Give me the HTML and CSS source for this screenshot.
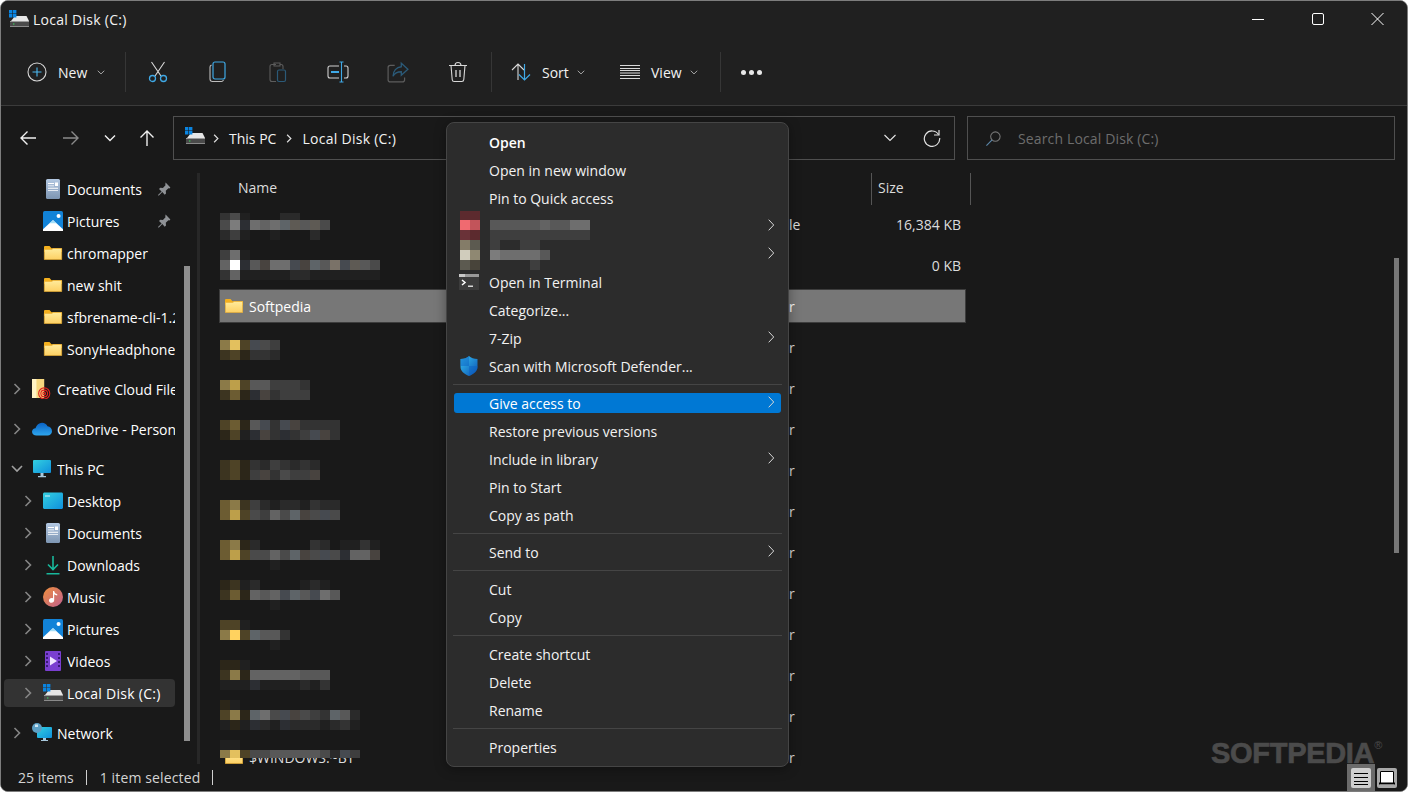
FILE: index.html
```html
<!DOCTYPE html>
<html lang="en">
<head>
<meta charset="utf-8">
<title>Local Disk (C:)</title>
<link rel="stylesheet" href="styles.css">
</head>
<body>
<svg class="defs" aria-hidden="true">
  <defs>
    <linearGradient id="gFolder" x1="0" y1="0" x2="0" y2="1"><stop offset="0" stop-color="#ffeb9c"/><stop offset="1" stop-color="#fdd063"/></linearGradient>
    <linearGradient id="gDoc" x1="0" y1="0" x2="0" y2="1"><stop offset="0" stop-color="#b3c8e2"/><stop offset="1" stop-color="#7d95b2"/></linearGradient>
    <linearGradient id="gDesk" x1="0" y1="0" x2="1" y2="1"><stop offset="0" stop-color="#33d0e0"/><stop offset="1" stop-color="#0f8fdc"/></linearGradient>
    <linearGradient id="gMusic" x1="0" y1="0" x2="1" y2="1"><stop offset="0" stop-color="#ef8f3c"/><stop offset="1" stop-color="#c0608f"/></linearGradient>
    <linearGradient id="gCloud" x1="0" y1="0" x2="0" y2="1"><stop offset="0" stop-color="#0a62c4"/><stop offset="1" stop-color="#2ea6ee"/></linearGradient>
    <linearGradient id="gShield" x1="0" y1="0" x2="1" y2="1"><stop offset="0" stop-color="#36c3f4"/><stop offset="1" stop-color="#0a4fb0"/></linearGradient>
    <symbol id="i-folder" viewBox="0 0 18 14"><path fill="#f4b01e" d="M0 1.2C0 .5.5 0 1.2 0h4.3l2 2.2h9.7c.5 0 .8.4.8.8v3H0z"/><path fill="url(#gFolder)" stroke="#eeb233" stroke-width=".7" d="M.35 3.4h7.4l1.3-.9h8.6v11.1H.35z"/></symbol>
    <symbol id="i-doc" viewBox="0 0 16 20"><rect x="1" y="0" width="14" height="20" rx="1.5" fill="url(#gDoc)"/><path fill="#fff" d="M3 4h6v.9H3zm0 2.4h6v.9H3zm0 2.4h10v.9H3zm0 2.4h10v.9H3z"/><rect x="10" y="3.5" width="3" height="3.5" fill="#fff"/></symbol>
    <symbol id="i-pic" viewBox="0 0 18 18"><rect width="18" height="18" rx="1.5" fill="#1283d8"/><circle cx="14" cy="4.5" r="1.8" fill="#fff"/><path fill="#fff" d="M0 16.5 9 8l9 8.5V18H0z"/><path fill="#7ed0f5" d="M9 8 5.8 11h6.4z" opacity=".7"/></symbol>
    <symbol id="i-drive" viewBox="0 0 20 18"><path fill="#e6e6e6" d="M2 11 6 6h11.5l2.5 5z"/><rect x="1" y="11" width="19" height="6" rx="1" fill="#4a4a4a"/><rect x="1" y="11" width="19" height="1" fill="#9a9a9a"/><rect x="1" y="16" width="19" height="1" fill="#8a8a8a"/><rect x="4" y="13.5" width="1.4" height="1" fill="#37e05b"/><path fill="#0a84e0" d="M0 0h3.4v3.4H0zm4 0h3.4v3.4H4zM0 4h3.4v3.4H0zm4 0h3.4v3.4H4z"/></symbol>
    <symbol id="i-pin" viewBox="0 0 14 14"><path fill="#8f9296" d="M8.6.6 13.4 5.4l-1 1-1-.2-2.6 2.6.2 2.6-1.3 1.3-2.4-2.6-3.6 3.6-.7-.7L4.6 9.4 2 7l1.3-1.3 2.6.2 2.6-2.6-.2-1z"/></symbol>
    <symbol id="i-chev" viewBox="0 0 8 12"><path fill="none" stroke="currentColor" stroke-width="1.6" d="M1.5 1 6.5 6l-5 5"/></symbol>
    <symbol id="i-down" viewBox="0 0 10 6"><path fill="none" stroke="currentColor" stroke-width="1.1" d="M1 .8 5 4.8 9 .8"/></symbol>
    <symbol id="i-sub" viewBox="0 0 7 12"><path fill="none" stroke="currentColor" stroke-width="1" d="m.7.7 5 5.3-5 5.3"/></symbol>
  </defs>
</svg>
<div class="window">
  <header class="titlebar">
    <svg class="title-icon"><use href="#i-drive"/></svg>
    <span class="title-text wide">Local Disk (C:)</span>
    <div class="caption">
      <svg class="cap-btn" viewBox="0 0 60 40"><path stroke="#fff" d="M24 19.5h12"/></svg>
      <svg class="cap-btn" viewBox="0 0 60 40"><rect x="24.5" y="13.5" width="11" height="11" rx="1.5" fill="none" stroke="#fff"/></svg>
      <svg class="cap-btn" viewBox="0 0 60 40"><path stroke="#fff" fill="none" d="m23.5 13 12 12m0-12-12 12"/></svg>
    </div>
  </header>

  <div class="toolbar">
    <div class="tb-group tb-new">
      <svg class="tb-ic" viewBox="0 0 20 20"><circle cx="10" cy="10" r="9" fill="none" stroke="#d8d8d8" stroke-width="1.1"/><path stroke="#4cb8f0" stroke-width="1.1" d="M10 5.5v9M5.5 10h9"/></svg>
      <span class="tb-label">New</span>
      <svg class="tb-caret"><use href="#i-down"/></svg>
    </div>
    <i class="tb-sep"></i>
    <div class="tb-icons">
      <span class="tb-btn"><svg viewBox="0 0 20 22"><path fill="none" stroke="#d8d8d8" stroke-width="1.1" d="M3.5 1 13 15M16.5 1 7 15"/><circle cx="4.5" cy="17.5" r="3" fill="none" stroke="#3fa9e6" stroke-width="1.3"/><circle cx="15.5" cy="17.5" r="3" fill="none" stroke="#3fa9e6" stroke-width="1.3"/></svg></span>
      <span class="tb-btn"><svg viewBox="0 0 20 22"><path fill="none" stroke="#bdbdbd" stroke-width="1.1" d="M3.5 4C2.5 4.500 2 5 2 6v12c0 1.500 1 2.500 2.500 2.500h9c1 0 1.500-.5 2-1.500"/><rect x="5" y="1" width="12" height="17" rx="2" fill="none" stroke="#3fa9e6" stroke-width="1.2"/></svg></span>
      <span class="tb-btn"><svg viewBox="0 0 20 22"><path fill="none" stroke="#5c5c5c" stroke-width="1.1" d="M8 3.500H4C2.800 3.500 2 4.300 2 5.500v13c0 1.200.8 2 2 2h4M6 2h6v3H6zM12 3.500h1c1.200 0 2 .8 2 2V8"/><rect x="9.500" y="9" width="8" height="11.500" rx="1.500" fill="none" stroke="#2b5a78" stroke-width="1.200"/></svg></span>
      <span class="tb-btn"><svg viewBox="0 0 22 22"><path fill="none" stroke="#d0d0d0" stroke-width="1.1" d="M12 5H3C1.800 5 1 5.800 1 7v8c0 1.200.8 2 2 2h9M17 5h2c1.200 0 2 .8 2 2v8c0 1.200-.8 2-2 2h-2"/><path stroke="#3fa9e6" stroke-width="2" d="M4 11h8"/><path fill="none" stroke="#3fa9e6" stroke-width="1.1" d="M14.500 1v20M12.500 1h4M12.500 21h4"/></svg></span>
      <span class="tb-btn"><svg viewBox="0 0 20 20"><path fill="none" stroke="#5c5c5c" stroke-width="1.1" d="M7 4H3C1.800 4 1 4.800 1 6v11c0 1.200.8 2 2 2h11c1.200 0 2-.8 2-2v-2"/><path fill="none" stroke="#2b5a78" stroke-width="1.200" d="M13 2l6 5.500-6 5.500V9.800c-3.500 0-6 1-7.500 4C5.500 9 8.500 5.500 13 5.200z"/></svg></span>
      <span class="tb-btn"><svg viewBox="0 0 20 22"><path fill="none" stroke="#d8d8d8" stroke-width="1.1" d="M1 4.500h18M3 4.500l1.200 14c.1 1.200 1 2 2 2h7.600c1 0 1.900-.8 2-2l1.200-14M7 4.500c0-2 1.300-3 3-3s3 1 3 3"/><path stroke="#d8d8d8" stroke-width="1.3" d="M8 9v7M12 9v7"/></svg></span>
    </div>
    <i class="tb-sep tb-sep2"></i>
    <div class="tb-group tb-sort">
      <svg class="tb-ic" viewBox="0 0 20 20"><path fill="none" stroke="#d8d8d8" stroke-width="1.1" d="M7 18V2M1 8l6-6 6 6"/><path fill="none" stroke="#3fa9e6" stroke-width="1.2" d="M13.500 2v16M8 12.500l5.500 5.500 5.500-5.500"/></svg>
      <span class="tb-label">Sort</span>
      <svg class="tb-caret"><use href="#i-down"/></svg>
    </div>
    <div class="tb-group tb-view">
      <svg class="tb-ic" viewBox="0 0 20 14"><path stroke="#d8d8d8" stroke-width="1" d="M0 .5h20M0 3.500h20M0 5.500h20M0 8h20M0 10.500h20M0 13.500h20"/></svg>
      <span class="tb-label">View</span>
      <svg class="tb-caret"><use href="#i-down"/></svg>
    </div>
    <i class="tb-sep tb-sep3"></i>
    <div class="tb-dots"><i></i><i></i><i></i></div>
  </div>

  <nav class="navrow">
    <div class="nav-btns">
      <svg viewBox="0 0 18 16"><path fill="none" stroke="#f0f0f0" stroke-width="1.400" d="M17 8H2M8.500 1.500 2 8l6.500 6.500"/></svg>
      <svg viewBox="0 0 18 16"><path fill="none" stroke="#8a8a8a" stroke-width="1.400" d="M1 8h15M9.500 1.500 16 8l-6.500 6.500"/></svg>
      <svg class="nav-small" viewBox="0 0 12 8"><path fill="none" stroke="#f0f0f0" stroke-width="1.400" d="m1 1.500 5 5 5-5"/></svg>
      <svg viewBox="0 0 16 18"><path fill="none" stroke="#f0f0f0" stroke-width="1.400" d="M8 17V2M1.500 8.500 8 2l6.500 6.500"/></svg>
    </div>
    <div class="address">
      <svg class="addr-icon"><use href="#i-drive"/></svg>
      <svg class="crumb-sep"><use href="#i-chev"/></svg>
      <span>This PC</span>
      <svg class="crumb-sep crumb-sep2"><use href="#i-chev"/></svg>
      <span class="wide">Local Disk (C:)</span>
      <span class="addr-spacer"></span>
      <svg class="addr-down" viewBox="0 0 12 8"><path fill="none" stroke="#e6e6e6" stroke-width="1.100" d="m.5 1 5.500 5.500L11.500 1"/></svg>
      <svg class="addr-refresh" viewBox="0 0 18 18"><path fill="none" stroke="#e0e0e0" stroke-width="1.200" d="M15.500 5.500A7.700 7.700 0 1 0 16.700 9"/><path fill="none" stroke="#e0e0e0" stroke-width="1.200" d="M16 1v5h-5"/></svg>
    </div>
    <div class="search">
      <svg viewBox="0 0 18 18"><circle cx="11" cy="7" r="5" fill="none" stroke="#777" stroke-width="1.100"/><path stroke="#5b86a8" stroke-width="1.200" d="M7.500 10.500 1.500 16.500"/></svg>
      <span class="wide-s">Search Local Disk (C:)</span>
    </div>
  </nav>

  <main class="content">
    <aside class="sidebar">
      <div class="tree">
        <div class="tree-row child"><i class="twist"></i><svg class="ti"><use href="#i-doc"/></svg><span class="tl">Documents</span><svg class="pin"><use href="#i-pin"/></svg></div>
        <div class="tree-row child"><i class="twist"></i><svg class="ti"><use href="#i-pic"/></svg><span class="tl">Pictures</span><svg class="pin"><use href="#i-pin"/></svg></div>
        <div class="tree-row child"><i class="twist"></i><svg class="ti ti-f"><use href="#i-folder"/></svg><span class="tl">chromapper</span></div>
        <div class="tree-row child"><i class="twist"></i><svg class="ti ti-f"><use href="#i-folder"/></svg><span class="tl">new shit</span></div>
        <div class="tree-row child"><i class="twist"></i><svg class="ti ti-f"><use href="#i-folder"/></svg><span class="tl">sfbrename-cli-1.2.0</span></div>
        <div class="tree-row child"><i class="twist"></i><svg class="ti ti-f"><use href="#i-folder"/></svg><span class="tl">SonyHeadphonesClient</span></div>

        <div class="tree-row top spaced"><svg class="twist"><use href="#i-chev"/></svg><svg class="ti" viewBox="0 0 18 18"><path fill="#f5d77e" d="M0 0h11v17H0z"/><path fill="#fff3c4" d="M0 0h4v17H0z"/><g fill="none" stroke="#e0201c" stroke-width="1"><circle cx="11" cy="13" r="5"/><circle cx="11" cy="13" r="3"/><circle cx="11" cy="13" r="1.200"/></g></svg><span class="tl">Creative Cloud Files</span></div>
        <div class="tree-row top spaced"><svg class="twist"><use href="#i-chev"/></svg><svg class="ti" viewBox="0 0 20 14"><path fill="url(#gCloud)" d="M4.500 13.500C2 13.500 0 12 0 9.800c0-2 1.500-3.400 3.500-3.600C4.500 3 7 .8 10 .8c2.500 0 4.500 1.300 5.500 3.500C18 4.700 20 6.500 20 9.300c0 2.500-2 4.200-4.500 4.200z"/></svg><span class="tl">OneDrive - Personal</span></div>
        <div class="tree-row top spaced"><svg class="twist open" viewBox="0 0 12 8"><path fill="none" stroke="#a0a0a0" stroke-width="1.600" d="m1 1 5 5 5-5"/></svg><svg class="ti" viewBox="0 0 20 18"><rect x="1" y="0" width="18" height="13" rx="1" fill="url(#gDesk)"/><path fill="#a8c8dc" d="M8.500 13h3v3h-3zM6 16h8v1.200H6z"/></svg><span class="tl">This PC</span></div>
        <div class="tree-row child"><svg class="twist"><use href="#i-chev"/></svg><svg class="ti ti-w" viewBox="0 0 20 17"><path fill="url(#gDesk)" d="M1.500 0h17c.8 0 1.500.7 1.500 1.500V15c0 .8-.7 1.500-1.500 1.500h-17C.7 16.500 0 15.800 0 15V1.500C0 .7.700 0 1.500 0z"/><path fill="#d8f4fb" d="M2 3h5v1H2z"/></svg><span class="tl">Desktop</span></div>
        <div class="tree-row child"><svg class="twist"><use href="#i-chev"/></svg><svg class="ti"><use href="#i-doc"/></svg><span class="tl">Documents</span></div>
        <div class="tree-row child"><svg class="twist"><use href="#i-chev"/></svg><svg class="ti" viewBox="0 0 18 20"><path fill="none" stroke="#18b89c" stroke-width="1.600" d="M9 1v13M4 9.500l5 5 5-5M2.500 18.800h13"/></svg><span class="tl">Downloads</span></div>
        <div class="tree-row child"><svg class="twist"><use href="#i-chev"/></svg><svg class="ti ti-w" viewBox="0 0 20 20"><circle cx="10" cy="10" r="10" fill="url(#gMusic)"/><path fill="#fff" d="M10 4h1.200c.3 2 1.500 2.800 3 3v1.500c-1.200 0-2.200-.5-3-1.200V13c0 1.700-1.200 2.800-2.700 2.800S6 14.800 6 13.400s1.100-2.500 2.600-2.500c.6 0 1 .1 1.400.3z"/></svg><span class="tl">Music</span></div>
        <div class="tree-row child"><svg class="twist"><use href="#i-chev"/></svg><svg class="ti"><use href="#i-pic"/></svg><span class="tl">Pictures</span></div>
        <div class="tree-row child"><svg class="twist"><use href="#i-chev"/></svg><svg class="ti" viewBox="0 0 16 20"><rect width="16" height="20" rx="1" fill="#7a3fd0"/><path fill="#3a1a78" d="M1 2h2v2H1zm0 4h2v2H1zm0 4h2v2H1zm0 4h2v2H1zm12-12h2v2h-2zm0 4h2v2h-2zm0 4h2v2h-2zm0 4h2v2h-2z"/><path fill="#f0e6ff" d="M5 5.500 12 10l-7 4.500z"/></svg><span class="tl">Videos</span></div>
        <div class="tree-row child selected"><svg class="twist"><use href="#i-chev"/></svg><svg class="ti"><use href="#i-drive"/></svg><span class="tl wide">Local Disk (C:)</span></div>
        <div class="tree-row top spaced"><svg class="twist"><use href="#i-chev"/></svg><svg class="ti ti-w" viewBox="0 0 20 20"><rect x="5" y="4" width="15" height="11" rx="1" fill="url(#gDesk)"/><path fill="#a8c8dc" d="M11 15h3v2h-3zM9 17h7v1H9z"/><circle cx="5" cy="5" r="5" fill="#5d9fc4"/><path fill="#cfe6f2" d="M3 1.500h3v2.500H3z"/></svg><span class="tl">Network</span></div>
      </div>
      <div class="side-scroll"></div>
    </aside>
    <div class="split"></div>
    <section class="files">
      <div class="col-head">
        <span class="col-name">Name</span>
        <span class="col-size">Size</span>
      </div>

      <div class="row"><div class="cell-name"><div class="mos m6">
        <div class="ml lt"><i class="k2"></i><i class="k4"></i><i class="k0"></i><i></i><i></i><i></i><i class="k1"></i><i class="k1"></i></div>
        <div class="ml"><i class="k4"></i><i class="k8"></i><i class="b1"></i><i class="k7"></i><i class="k6"></i><i class="k7"></i><i class="b3"></i><i class="w2"></i><i class="k5"></i><i class="w2"></i><i class="k4"></i></div>
        <div class="ml"><i class="k1"></i><i class="k3"></i><i class="k0"></i><i></i><i></i><i class="k0"></i><i></i><i></i><i></i><i class="k1"></i></div>
      </div></div><div class="cell-type">System file</div><div class="cell-size">16,384 KB</div></div>

      <div class="row"><div class="cell-name"><div class="mos m2">
        <div class="ml"><i class="k3"></i><i class="k7"></i><i class="k0"></i></div>
        <div class="ml"><i class="k6"></i><i class="kw"></i><i class="b1"></i><i class="k5"></i><i class="w1"></i><i class="k7"></i><i class="k7"></i><i class="b2"></i><i class="w1"></i><i class="b3"></i><i class="k5"></i><i class="w3"></i><i class="b2"></i><i class="w2"></i><i class="k5"></i><i class="k4"></i></div>
        <div class="ml"><i class="k2"></i><i class="k6"></i><i class="k0"></i><i class="k0"></i><i class="k0"></i><i class="k0"></i><i class="k0"></i><i class="k1"></i><i class="k1"></i><i class="k0"></i><i class="k0"></i><i class="k0"></i><i class="k0"></i><i class="k0"></i><i class="k0"></i><i class="k0"></i></div>
      </div></div><div class="cell-type cell-blank"></div><div class="cell-size">0 KB</div></div>

      <div class="row selected"><div class="cell-name"><svg class="file-folder"><use href="#i-folder"/></svg><span>Softpedia</span></div><div class="cell-type">File folder</div><div class="cell-size"></div></div>

      <div class="row"><div class="cell-name"><div class="mos m10">
        <div class="ml"><i class="y4"></i><i class="y6"></i><i class="y2"></i><i class="b2"></i><i class="k4"></i><i class="k3"></i></div>
        <div class="ml"><i class="y1"></i><i class="y2"></i><i class="y0"></i><i class="k2"></i><i class="k2"></i><i class="k1"></i></div>
      </div></div><div class="cell-type">File folder</div><div class="cell-size"></div></div>

      <div class="row"><div class="cell-name"><div class="mos m9">
        <div class="ml"><i class="y4"></i><i class="y5"></i><i class="y2"></i><i class="k5"></i><i class="k5"></i><i class="k3"></i><i class="k3"></i><i class="k3"></i><i class="k2"></i></div>
        <div class="ml"><i class="y1"></i><i class="y3"></i><i class="y0"></i><i class="b1"></i><i class="w1"></i><i class="k2"></i><i class="k3"></i><i class="k3"></i><i class="k3"></i></div>
      </div></div><div class="cell-type">File folder</div><div class="cell-size"></div></div>

      <div class="row"><div class="cell-name"><div class="mos m8">
        <div class="ml"><i class="y2"></i><i class="y3"></i><i class="y0"></i><i class="k5"></i><i class="b2"></i><i class="k2"></i><i class="b2"></i><i class="w1"></i><i class="k2"></i><i class="k2"></i><i class="k2"></i><i class="k2"></i></div>
        <div class="ml"><i class="y0"></i><i class="y2"></i><i class="k0"></i><i class="b1"></i><i class="w1"></i><i class="k2"></i><i class="b1"></i><i class="k2"></i><i class="k3"></i><i class="b2"></i><i class="w1"></i><i class="k2"></i></div>
      </div></div><div class="cell-type">File folder</div><div class="cell-size"></div></div>

      <div class="row"><div class="cell-name"><div class="mos m7">
        <div class="ml"><i class="y1"></i><i class="y2"></i><i class="y0"></i><i class="k2"></i><i class="k1"></i><i class="k3"></i><i class="k2"></i><i class="k1"></i><i class="k2"></i><i class="k1"></i></div>
        <div class="ml"><i class="y1"></i><i class="y2"></i><i class="y0"></i><i class="k3"></i><i class="w1"></i><i class="k2"></i><i class="k4"></i><i class="k3"></i><i class="k3"></i><i class="w1"></i></div>
      </div></div><div class="cell-type">File folder</div><div class="cell-size"></div></div>

      <div class="row"><div class="cell-name"><div class="mos m6">
        <div class="ml"><i class="y3"></i><i class="y4"></i><i class="y1"></i><i class="k3"></i><i class="k1"></i><i class="k0"></i><i class="k1"></i><i class="k1"></i><i class="k0"></i><i class="k2"></i><i class="k1"></i><i class="k1"></i></div>
        <div class="ml"><i class="y3"></i><i class="y5"></i><i class="y2"></i><i class="k4"></i><i class="k3"></i><i class="k6"></i><i class="k4"></i><i class="b3"></i><i class="w1"></i><i class="k4"></i><i class="b2"></i><i class="k4"></i></div>
      </div></div><div class="cell-type">File folder</div><div class="cell-size"></div></div>

      <div class="row"><div class="cell-name"><div class="mos m5">
        <div class="ml"><i class="y3"></i><i class="y4"></i><i class="y0"></i><i class="k1"></i><i></i><i></i><i></i><i></i><i></i><i class="k2"></i><i class="k1"></i><i></i><i class="k0"></i><i class="k0"></i><i class="k2"></i><i class="k0"></i></div>
        <div class="ml"><i class="y3"></i><i class="y5"></i><i class="y2"></i><i class="k4"></i><i class="k4"></i><i class="k6"></i><i class="k4"></i><i class="b3"></i><i class="w1"></i><i class="k4"></i><i class="b2"></i><i class="k4"></i><i class="b1"></i><i class="k6"></i><i class="k6"></i><i class="w1"></i></div>
        <div class="ml"><i></i><i></i><i></i><i></i><i></i><i class="k0"></i></div>
      </div></div><div class="cell-type">File folder</div><div class="cell-size"></div></div>

      <div class="row"><div class="cell-name"><div class="mos m4">
        <div class="ml"><i class="y0"></i><i class="y1"></i><i class="k0"></i><i class="k1"></i><i></i><i></i><i></i><i></i><i class="k0"></i><i class="k1"></i><i class="k0"></i></div>
        <div class="ml"><i class="y1"></i><i class="y3"></i><i class="y0"></i><i class="k6"></i><i class="k5"></i><i class="k6"></i><i class="b2"></i><i class="b3"></i><i class="k5"></i><i class="b2"></i><i class="k7"></i><i class="k5"></i></div>
        <div class="ml"><i></i><i></i><i></i><i></i><i></i><i class="k0"></i></div>
      </div></div><div class="cell-type">File folder</div><div class="cell-size"></div></div>

      <div class="row"><div class="cell-name"><div class="mos m3">
        <div class="ml"><i class="y2"></i><i class="y2"></i><i class="k0"></i></div>
        <div class="ml"><i class="y4"></i><i class="y7"></i><i class="y2"></i><i class="b3"></i><i class="k5"></i><i class="k5"></i><i class="k2"></i></div>
        <div class="ml"><i></i><i></i><i></i><i></i><i></i><i class="k0"></i></div>
      </div></div><div class="cell-type">File folder</div><div class="cell-size"></div></div>

      <div class="row"><div class="cell-name"><div class="mos m2">
        <div class="ml"><i class="y0"></i><i class="y0"></i><i class="k0"></i></div>
        <div class="ml"><i class="y1"></i><i class="y4"></i><i class="y0"></i><i class="k6"></i><i class="k6"></i><i class="k6"></i><i class="k6"></i><i class="k6"></i><i class="k5"></i><i class="k5"></i><i class="k5"></i></div>
        <div class="ml"><i class="k0"></i><i class="k0"></i><i class="k0"></i><i class="b1"></i><i class="k0"></i><i class="k0"></i><i class="k0"></i><i class="k0"></i><i class="k1"></i><i class="k0"></i><i class="k2"></i></div>
      </div></div><div class="cell-type">File folder</div><div class="cell-size"></div></div>

      <div class="row"><div class="cell-name"><div class="mos m1">
        <div class="ml"><i class="y0"></i><i class="k0"></i></div>
        <div class="ml"><i class="y2"></i><i class="y4"></i><i class="y0"></i><i class="b3"></i><i class="k7"></i><i class="k4"></i><i class="b2"></i><i class="w1"></i><i class="k4"></i><i class="k3"></i><i class="k2"></i><i class="b3"></i><i class="k5"></i><i class="k1"></i></div>
        <div class="ml"><i class="k0"></i><i class="y0"></i><i class="k0"></i><i class="b1"></i><i class="k1"></i><i class="k0"></i><i class="b1"></i><i class="k1"></i><i class="k1"></i><i class="k1"></i><i class="k0"></i><i class="k1"></i><i class="k2"></i><i class="k0"></i></div>
      </div></div><div class="cell-type">File folder</div><div class="cell-size"></div></div>

      <div class="row"><div class="cell-name last"><svg class="file-folder"><use href="#i-folder"/></svg><span>$WINDOWS.~BT</span><div class="mos over">
        <div class="ml"><i class="k0"></i><i class="k0"></i></div>
        <div class="ml lb"><i class="y4"></i><i class="y6"></i><i class="y2"></i><i class="k4"></i><i class="k4"></i><i class="k5"></i><i class="k5"></i><i class="k5"></i><i class="k5"></i><i class="k5"></i><i class="k4"></i><i class="k1"></i><i class="b2"></i><i class="k3"></i></div>
      </div></div><div class="cell-type">File folder</div><div class="cell-size"></div></div>

      <div class="list-scroll"></div>
    </section>
  </main>

  <footer class="status">
    <span>25 items</span><i class="st-sep"></i><span class="wide-s">1 item selected</span><i class="st-sep"></i>
    <span class="addr-spacer"></span>
    <div class="view-toggle active"><svg viewBox="0 0 20 20"><rect width="20" height="20" rx="2" fill="#cfcfcf"/><path stroke="#000" d="M3 5.500h14M3 9.500h14M3 13.500h14M3 16.500h14"/></svg></div>
    <div class="view-toggle"><svg viewBox="0 0 20 20"><rect width="20" height="20" rx="2" fill="#a8a8a8"/><rect x="3" y="3" width="14" height="14" fill="#fff"/><path fill="none" stroke="#000" d="M3.500 16V3.500h13V16"/><path stroke="#000" stroke-width="2" d="M2 15.500h16"/></svg></div>
  </footer>

  <div class="watermark">SOFTPEDIA<sup>®</sup></div>

  <div class="menu">
    <div class="menu-mos">
      <div class="mos-col">
        <div class="ml sm"><i class="r0"></i><i class="r0"></i></div>
        <div class="ml"><i class="r3"></i><i class="r2"></i></div>
        <div class="ml"><i class="r1"></i><i class="r0"></i></div>
        <div class="ml"><i class="s1"></i><i class="s0"></i></div>
        <div class="ml"><i class="s3"></i><i class="s2"></i></div>
        <div class="ml"><i class="s0"></i><i class="s4"></i></div>
      </div>
      <div class="mos-col">
        <div class="ml sm"></div>
        <div class="ml"><i class="k5"></i><i class="k5"></i><i class="k5"></i><i class="k5"></i><i class="k5"></i><i class="k6"></i><i class="k5"></i><i class="k5"></i><i class="k7"></i><i class="k7"></i></div>
        <div class="ml"><i class="k3"></i><i class="k3"></i><i class="k3"></i><i class="k3"></i><i class="k3"></i><i class="k3"></i><i class="k3"></i><i class="k3"></i><i class="k3"></i><i class="k3"></i></div>
        <div class="ml"><i class="k3"></i><i></i><i></i><i class="k3"></i><i class="k3"></i></div>
        <div class="ml"><i class="k8"></i><i class="k7"></i><i class="k7"></i><i class="k7"></i><i class="k7"></i><i class="k5"></i></div>
        <div class="ml"><i></i><i></i><i></i><i></i><i class="k3"></i></div>
      </div>
    </div>
    <div class="mi bold"><div class="mi-in"><span>Open</span></div></div>
    <div class="mi"><div class="mi-in"><span>Open in new window</span></div></div>
    <div class="mi"><div class="mi-in"><span>Pin to Quick access</span></div></div>
    <div class="mi"><div class="mi-in"><span></span><svg class="sub"><use href="#i-sub"/></svg></div></div>
    <div class="mi"><div class="mi-in"><span></span><svg class="sub"><use href="#i-sub"/></svg></div></div>
    <div class="mi"><div class="mi-in">
      <svg class="mi-ic" viewBox="0 0 20 16"><rect width="20" height="16" fill="#3c3c3c"/><rect width="20" height="3" fill="#9a9a9a"/><rect width="6" height="3" fill="#c8c8c8"/><path fill="none" stroke="#fff" stroke-width="1.500" d="m3 6 3 2.500-3 2.500"/><path stroke="#fff" stroke-width="1.200" d="M9 12.200h5"/></svg>
      <span>Open in Terminal</span></div></div>
    <div class="mi"><div class="mi-in"><span>Categorize...</span></div></div>
    <div class="mi"><div class="mi-in"><span>7-Zip</span><svg class="sub"><use href="#i-sub"/></svg></div></div>
    <div class="mi"><div class="mi-in">
      <svg class="mi-ic mi-shield" viewBox="0 0 18 20"><path fill="url(#gShield)" d="M9 0c2 2 5 3 8.500 3v8c0 4-3.500 7-8.500 9C4 18 .5 15 .5 11V3C4 3 7 2 9 0z"/><path fill="#0b5ec2" d="M9 10h8.500v1c0 4-3.500 7-8.500 9zM.5 3C4 3 7 2 9 0v10H.5z" opacity=".45"/></svg>
      <span>Scan with Microsoft Defender...</span></div></div>
    <hr class="msep">
    <div class="mi active"><div class="mi-in"><span>Give access to</span><svg class="sub"><use href="#i-sub"/></svg></div></div>
    <div class="mi"><div class="mi-in"><span>Restore previous versions</span></div></div>
    <div class="mi"><div class="mi-in"><span>Include in library</span><svg class="sub"><use href="#i-sub"/></svg></div></div>
    <div class="mi"><div class="mi-in"><span>Pin to Start</span></div></div>
    <div class="mi"><div class="mi-in"><span>Copy as path</span></div></div>
    <hr class="msep">
    <div class="mi"><div class="mi-in"><span>Send to</span><svg class="sub"><use href="#i-sub"/></svg></div></div>
    <hr class="msep">
    <div class="mi"><div class="mi-in"><span>Cut</span></div></div>
    <div class="mi"><div class="mi-in"><span>Copy</span></div></div>
    <hr class="msep">
    <div class="mi"><div class="mi-in"><span>Create shortcut</span></div></div>
    <div class="mi"><div class="mi-in"><span>Delete</span></div></div>
    <div class="mi"><div class="mi-in"><span>Rename</span></div></div>
    <hr class="msep">
    <div class="mi"><div class="mi-in"><span>Properties</span></div></div>
  </div>
</div>
</body>
</html>
```

FILE: styles.css
```css
* { box-sizing: border-box; }
html, body { margin: 0; height: 100%; background: #fff; overflow: hidden; }
body { font-family: "Open Sans", "Noto Sans", "Liberation Sans", sans-serif; font-size: 14px; color: #f2f2f2; }
.defs { position: absolute; width: 0; height: 0; }
svg { display: block; flex: none; }
.wide { letter-spacing: .28px; }
.wide-s { letter-spacing: .14px; }

.window { position: relative; width: 1408px; height: 792px; display: flex; flex-direction: column; background: #191919; border: 1px solid #7d7d7d; border-radius: 8px; overflow: hidden; }

.titlebar { height: 39px; flex: none; background: #202020; display: flex; align-items: center; padding-left: 8px; }
.title-icon { width: 20px; height: 18px; margin-right: 4px; margin-top: -4px; }
.title-text { font-size: 14px; margin-top: -2px; }
.caption { margin-left: auto; display: flex; margin-right: -1px; }
.cap-btn { width: 60px; height: 40px; margin-top: -1px; }

.toolbar { height: 66px; flex: none; background: #202020; border-bottom: 1px solid #3b3b3b; display: flex; align-items: center; padding-bottom: 1px; }
.tb-group { display: flex; align-items: center; }
.tb-new { width: 124px; padding-left: 26px; }
.tb-ic { width: 20px; height: 20px; }
.tb-label { margin-left: 11px; }
.tb-caret { width: 8px; height: 5px; margin-left: 8px; color: #bdbdbd; }
.tb-new .tb-caret { margin-left: 10px; }
.tb-sep { width: 1px; height: 40px; background: #363636; display: block; flex: none; }
.tb-icons { display: flex; margin-left: 2px; }
.tb-btn { width: 60px; display: flex; justify-content: center; }
.tb-btn svg { width: 22px; height: 22px; }
.tb-sep2 { margin-left: 3px; }
.tb-sort { margin-left: 19px; width: 109px; }
.tb-view { width: 100px; }
.tb-view .tb-ic { height: 14px; }
.tb-sep3 { margin-left: 0; }
.tb-dots { display: flex; gap: 3px; margin-left: 20px; }
.tb-dots i { width: 5px; height: 5px; border-radius: 50%; background: #e8e8e8; display: block; }

.navrow { height: 67px; flex: none; display: flex; align-items: flex-start; padding-top: 10px; }
.nav-btns { width: 172px; height: 44px; display: flex; align-items: center; padding-left: 18px; }
.nav-btns svg { width: 18px; height: 18px; margin-right: 25px; }
.nav-btns svg:nth-child(2) { margin-right: 24px; }
.nav-btns svg.nav-small { width: 12px; height: 8px; margin-right: 22px; }
.address { width: 782px; height: 44px; border: 1px solid #4f4f4f; display: flex; align-items: center; padding-left: 11px; background: #191919; }
.addr-icon { width: 20px; height: 18px; margin-top: -5px; }
.crumb-sep { width: 6px; height: 9px; margin: 0 10px 0 8px; color: #dcdcdc; }
.crumb-sep2 { margin: 0 10px; }
.addr-spacer { flex: 1; }
.addr-down { width: 12px; height: 8px; margin-right: 27px; }
.addr-refresh { width: 18px; height: 18px; margin-right: 13px; }
.search { width: 428px; height: 44px; margin-left: 12px; border: 1px solid #4f4f4f; display: flex; align-items: center; padding-left: 17px; color: #6d6d6d; }
.search svg { width: 17px; height: 17px; margin-right: 16px; }

.content { flex: 1; min-height: 0; display: flex; overflow: hidden; }
.sidebar { display: flex; flex: none; }
.tree { width: 175px; overflow: hidden; display: flex; flex-direction: column; }
.tree-row { height: 28px; flex: none; margin: 2px 0 2px 3px; width: 171px; display: flex; align-items: center; border-radius: 4px; white-space: nowrap; overflow: hidden; color: #fff; }
.tree-row.spaced { margin-top: 10px; }
.tree-row.selected { background: #333; }
.twist { width: 8px; height: 12px; color: #858585; flex: none; display: block; }
.twist.open { width: 12px; height: 8px; margin-left: -2px; margin-right: -2px; }
.child { padding-left: 20px; }
.top { padding-left: 9px; }
.ti { width: 20px; height: 20px; }
.top .ti { margin-left: 11px; margin-right: 5px; }
.child .ti { margin-left: 11px; margin-right: 4px; }
.ti.ti-f { height: 14px; }
.tl { display: block; flex: 1; overflow: hidden; }
.pin { width: 14px; height: 14px; margin-right: 4px; }
.side-scroll { width: 6px; height: 475px; margin: 93px 0 0 8px; background: #8e8e8e; }
.split { width: 3px; margin: -3px 0 0 7px; background: #272727; flex: none; }

.files { position: relative; flex: 1; min-width: 0; overflow: hidden; }
.col-head { height: 32px; margin-bottom: 2px; display: flex; align-items: flex-start; color: #dcdcdc; }
.col-name { width: 671px; padding-left: 38px; height: 32px; line-height: 30px; }
.col-size { width: 100px; height: 32px; line-height: 30px; padding-left: 6px; border-left: 1px solid #555; border-right: 1px solid #555; }
.row { width: 747px; height: 34px; margin: 0 0 7px 19px; display: flex; align-items: center; border: 1px solid transparent; color: #dcdcdc; position: relative; }
.row.selected { background: #777; border-color: #3d3d3d; color: #fff; }
.cell-name { width: 510px; height: 100%; display: flex; align-items: center; flex: none; position: relative; }
.cell-type { flex: 1; white-space: nowrap; }
.cell-size { width: 100px; text-align: right; padding-right: 4px; }
.file-folder { width: 18px; height: 14px; margin: 0 6px 0 5px; }
.mos { align-self: flex-start; }
.m1 { margin-top: 0; } .m2 { margin-top: 1px; } .m3 { margin-top: 2px; } .m4 { margin-top: 3px; } .m5 { margin-top: 4px; }
.m6 { margin-top: 5px; } .m7 { margin-top: 6px; } .m8 { margin-top: 7px; } .m9 { margin-top: 8px; } .m10 { margin-top: 9px; }
.mos.over { position: absolute; left: 0; top: -1px; background: #191919; width: 300px; }
.ml { display: flex; height: 10px; }
.ml i { width: 10px; height: 10px; display: block; flex: none; }
.ml.lt { height: 7px; } .ml.lt i { height: 7px; }
.ml.lb { height: 8px; } .ml.lb i { height: 8px; }
.ml.sm { height: 9px; } .ml.sm i { height: 9px; }
.k0 { background: #202020; } .k1 { background: #2a2a2a; } .k2 { background: #333; } .k3 { background: #3e3e3e; }
.k4 { background: #4a4a4a; } .k5 { background: #585858; } .k6 { background: #636363; } .k7 { background: #6e6e6e; } .k8 { background: #7c7c7c; }
.kw { background: #fff; }
.b1 { background: #2c2e33; } .b2 { background: #464a50; } .b3 { background: #5e6468; }
.w1 { background: #48433f; } .w2 { background: #5e5a54; } .w3 { background: #7a7268; }
.y0 { background: #2c2619; } .y1 { background: #3c3420; } .y2 { background: #4e4326; } .y3 { background: #6c5c32; }
.y4 { background: #8b7a48; } .y5 { background: #bd9f4a; } .y6 { background: #e3c05e; } .y7 { background: #ffd25f; }
.r0 { background: #5c2a2e; } .r1 { background: #6a3238; } .r2 { background: #c2545a; } .r3 { background: #f06a70; }
.s0 { background: #5c5a50; } .s1 { background: #847c68; } .s2 { background: #8f8872; } .s3 { background: #d0ccbc; } .s4 { background: #48443a; }
.list-scroll { position: absolute; top: 85px; right: 8px; width: 5px; height: 295px; background: #777; }

.status { height: 27px; flex: none; display: flex; align-items: center; padding-left: 17px; color: #d4d4d4; background: #191919; position: relative; }
.st-sep { width: 1px; height: 15px; background: #d0d0d0; margin: 0 13px 0 12px; display: block; }
.view-toggle { width: 28px; height: 28px; display: flex; align-items: center; justify-content: center; }
.view-toggle svg { width: 20px; height: 20px; }
.view-toggle.active { background: #6b6b6b; }
.view-toggle:last-child { margin-right: 8px; width: 24px; }

.watermark { position: absolute; left: 1210px; top: 736px; font-family: "Liberation Sans", sans-serif; font-weight: 700; font-size: 29px; letter-spacing: -.3px; color: #4b4b4b; -webkit-text-stroke: .7px #4b4b4b; white-space: nowrap; }
.watermark sup { font-size: 11px; font-weight: 400; vertical-align: 14px; line-height: 0; -webkit-text-stroke: 0; }

.menu { position: absolute; left: 445px; top: 121px; width: 343px; height: 645px; background: #2c2c2c; border: 1px solid #454545; border-radius: 8px; padding: 5px 7px; box-shadow: 0 2px 12px rgba(0,0,0,.35); color: #f2f2f2; }
.menu-mos { position: absolute; left: 13px; top: 88px; display: flex; gap: 10px; }
.mi { height: 28px; padding: 4px 0; }
.mi-in { height: 20px; display: flex; align-items: center; padding: 0 6px 0 35px; border-radius: 3px; position: relative; }
.mi-in span { flex: 1; white-space: nowrap; }
.mi.bold { font-weight: 600; color: #fff; }
.mi.active .mi-in { background: #0078d4; color: #fff; }
.mi-ic { position: absolute; left: 5px; top: 2px; width: 20px; height: 16px; }
.mi-shield { height: 20px; top: 0; left: 5px; }
.sub { width: 7px; height: 12px; color: #d8d8d8; margin-top: -2px; }
.msep { border: 0; height: 1px; background: #454545; margin: 4px -1px; }
```
